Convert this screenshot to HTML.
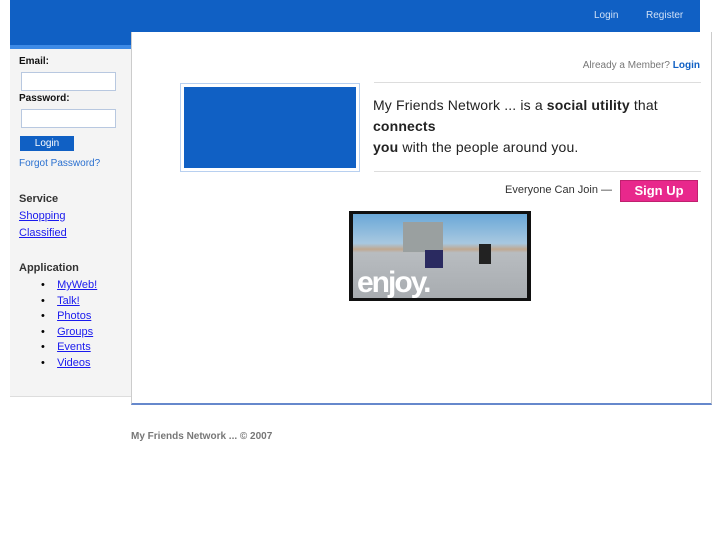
<!DOCTYPE html>
<html><head><style>
*{margin:0;padding:0;box-sizing:border-box}
body{width:727px;height:545px;background:#fff;font-family:"Liberation Sans",sans-serif;position:relative;overflow:hidden}
.a{position:absolute}
a{color:#1a1aee;text-decoration:underline}
</style></head><body>
<div class="a" style="left:10px;top:0;width:690px;height:32px;background:#1060c4"></div>
<div class="a" style="left:10px;top:32px;width:121px;height:13px;background:#1060c4"></div>
<div class="a" style="left:10px;top:45px;width:121px;height:4px;background:#3d8ae6"></div>
<div class="a" style="left:594px;top:10px;font-size:10px;color:#cfe0f6">Login</div>
<div class="a" style="left:646px;top:10px;font-size:10px;color:#cfe0f6">Register</div>
<div class="a" style="left:10px;top:49px;width:122px;height:348px;background:#f4f4f4;border-bottom:1px solid #ddd"></div>
<div class="a" style="left:131px;top:32px;width:581px;height:373px;background:#fff;border:1px solid #ccc;border-top:none;border-bottom:2px solid #6688cc"></div>
<div class="a" style="left:19px;top:56px;font-size:10px;font-weight:bold;color:#111">Email:</div>
<div class="a" style="left:21px;top:72px;width:95px;height:19px;background:#fff;border:1px solid #b8c8e0"></div>
<div class="a" style="left:19px;top:93px;font-size:10px;font-weight:bold;color:#111">Password:</div>
<div class="a" style="left:21px;top:109px;width:95px;height:19px;background:#fff;border:1px solid #b8c8e0"></div>
<div class="a" style="left:20px;top:136px;width:54px;height:15px;background:#1060c4;color:#fff;font-size:10px;text-align:center;line-height:15px">Login</div>
<div class="a" style="left:19px;top:158px;font-size:10px;color:#2a70d0">Forgot Password?</div>
<div class="a" style="left:19px;top:193px;font-size:11px;font-weight:bold;color:#333">Service</div>
<div class="a" style="left:19px;top:210px;font-size:11px"><a>Shopping</a></div>
<div class="a" style="left:19px;top:227px;font-size:11px"><a>Classified</a></div>
<div class="a" style="left:19px;top:262px;font-size:11px;font-weight:bold;color:#333">Application</div>
<div class="a" style="left:41px;top:278px;font-size:11px;line-height:15.5px">
<div>•&nbsp;&nbsp;&nbsp;&nbsp;<a>MyWeb!</a></div><div>•&nbsp;&nbsp;&nbsp;&nbsp;<a>Talk!</a></div><div>•&nbsp;&nbsp;&nbsp;&nbsp;<a>Photos</a></div><div>•&nbsp;&nbsp;&nbsp;&nbsp;<a>Groups</a></div><div>•&nbsp;&nbsp;&nbsp;&nbsp;<a>Events</a></div><div>•&nbsp;&nbsp;&nbsp;&nbsp;<a>Videos</a></div></div>
<div class="a" style="left:180px;top:83px;width:180px;height:89px;border:1px solid #b8d0f0;padding:3px"><div style="width:100%;height:100%;background:#1060c4"></div></div>
<div class="a" style="right:27px;top:60px;font-size:10px;color:#777">Already a Member? <b style="color:#1060c4">Login</b></div>
<div class="a" style="left:374px;top:82px;width:327px;height:1px;background:#ddd"></div>
<div class="a" style="left:373px;top:95px;font-size:14px;line-height:21px;color:#222;width:330px;letter-spacing:0.15px">My Friends Network ... is a <b>social utility</b> that<br><b>connects</b><br><b>you</b> with the people around you.</div>
<div class="a" style="left:374px;top:171px;width:327px;height:1px;background:#ddd"></div>
<div class="a" style="left:505px;top:184px;font-size:11px;color:#333">Everyone Can Join —</div>
<div class="a" style="left:620px;top:180px;width:78px;height:22px;background:#e8288c;border:1px solid #c0206f;color:#fff;font-weight:bold;font-size:13px;text-align:center;line-height:20px">Sign Up</div>
<div class="a" style="left:349px;top:211px;width:182px;height:90px;background:#111;padding:3px 4px">
<div style="width:100%;height:100%;position:relative;background:linear-gradient(#6aa8d8 0%,#a8c8e0 35%,#c0a890 42%,#b8bcc0 46%,#a8acb0 100%)">
<div class="a" style="left:50px;top:8px;width:40px;height:30px;background:#9aa0a0"></div>
<div class="a" style="left:72px;top:36px;width:18px;height:18px;background:#2a2a60"></div>
<div class="a" style="left:126px;top:30px;width:12px;height:20px;background:#222"></div>
<div class="a" style="left:4px;top:54px;font-size:30px;font-weight:bold;color:#fff;letter-spacing:-2px;line-height:30px">enjoy.</div>
</div></div>
<div class="a" style="left:131px;top:431px;font-size:10px;font-weight:bold;color:#777">My Friends Network ... © 2007</div>
</body></html>
